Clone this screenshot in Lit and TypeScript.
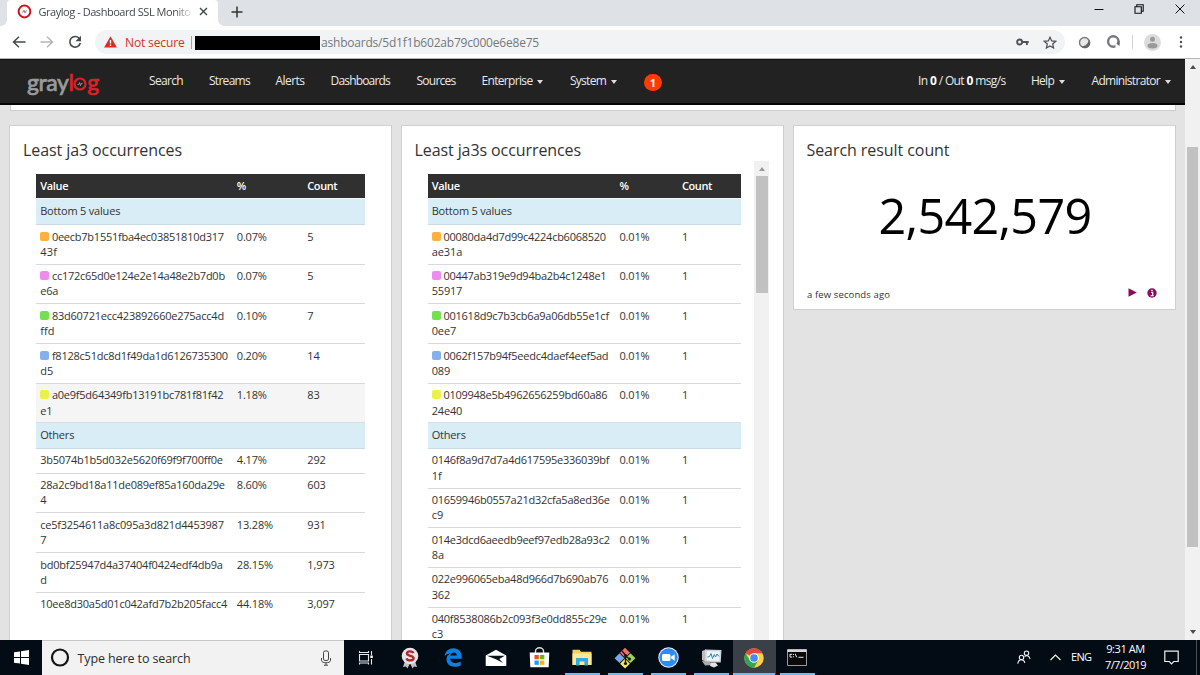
import { LitElement, html, css, svg } from "lit";
import { customElement, property } from "lit/decorators.js";
import { classMap } from "lit/directives/class-map.js";

/** One line of text whose tracking is tuned so that it spans a given width. */
@customElement("fit-text")
class FitText extends LitElement {
  @property({ type: Number }) w = 0;
  static styles = css`
    :host { display: inline-block; white-space: nowrap; }
    .line { display: inline-block; white-space: pre; }
  `;
  render() {
    return html`<span class="line"><slot></slot></span>`;
  }
  firstUpdated() {
    const line = this.renderRoot.querySelector(".line") as HTMLElement;
    const chars = (this.textContent || "").length;
    const natural = line.getBoundingClientRect().width;
    if (chars && this.w) {
      line.style.letterSpacing = `${(this.w - natural) / chars}px`;
      this.style.width = `${this.w}px`;
    }
  }
}

const t = (text: string, w: number) => html`<fit-text w=${w}>${text}</fit-text>`;

type Row = { lines: [string, number][]; pct: string; pw: number; count: string; cw: number; color?: string; hover?: boolean };

const row = (a: string, aw: number, b: string, bw: number, pct: string, pw: number, count: string, cw: number, color?: string, hover = false): Row => ({
  lines: b ? [[a, aw], [b, bw]] : [[a, aw]], pct, pw, count, cw, color, hover,
});

const ORANGE = "#fbb040", PINK = "#ee8cee", GREEN = "#75e04e", BLUE = "#84b0ee", YELLOW = "#ebf149";

const ja3Top: Row[] = [
  row("0eecb7b1551fba4ec03851810d317", 172, "43f", 17, "0.07%", 30, "5", 6.3, ORANGE),
  row("cc172c65d0e124e2e14a48e2b7d0b", 173, "e6a", 18, "0.07%", 30, "5", 6.3, PINK),
  row("83d60721ecc423892660e275acc4d", 172, "ffd", 14.5, "0.10%", 30, "7", 6.3, GREEN),
  row("f8128c51dc8d1f49da1d6126735300", 176, "d5", 13, "0.20%", 30, "14", 12.6, BLUE),
  row("a0e9f5d64349fb13191bc781f81f42", 171.5, "e1", 12, "1.18%", 30, "83", 12.6, YELLOW, true),
];
const ja3Others: Row[] = [
  row("3b5074b1b5d032e5620f69f9f700ff0e", 182.5, "", 0, "4.17%", 30, "292", 18.5),
  row("28a2c9bd18a11de089ef85a160da29e", 184.5, "4", 6.3, "8.60%", 30, "603", 18.5),
  row("ce5f3254611a8c095a3d821d4453987", 183.5, "7", 6.3, "13.28%", 36.3, "931", 18.5),
  row("bd0bf25947d4a37404f0424edf4db9a", 182.5, "d", 6.5, "28.15%", 36.3, "1,973", 27.5),
  row("10ee8d30a5d01c042afd7b2b205facc4", 187, "", 0, "44.18%", 36.3, "3,097", 27.5),
];
const ja3sTop: Row[] = [
  row("00080da4d7d99c4224cb6068520", 162.5, "ae31a", 30.5, "0.01%", 30, "1", 6.3, ORANGE),
  row("00447ab319e9d94ba2b4c1248e1", 163, "55917", 30.5, "0.01%", 30, "1", 6.3, PINK),
  row("001618d9c7b3cb6a9a06db55e1cf", 165.5, "0ee7", 24.5, "0.01%", 30, "1", 6.3, GREEN),
  row("0062f157b94f5eedc4daef4eef5ad", 165, "089", 18.5, "0.01%", 30, "1", 6.3, BLUE),
  row("0109948e5b4962656259bd60a86", 164, "24e40", 30.5, "0.01%", 30, "1", 6.3, YELLOW),
];
const ja3sOthers: Row[] = [
  row("0146f8a9d7d7a4d617595e336039bf", 177.5, "1f", 10, "0.01%", 30, "1", 6.3),
  row("01659946b0557a21d32cfa5a8ed36e", 178, "c9", 11.5, "0.01%", 30, "1", 6.3),
  row("014e3dcd6aeedb9eef97edb28a93c2", 178, "8a", 12.5, "0.01%", 30, "1", 6.3),
  row("022e996065eba48d966d7b690ab76", 176.5, "362", 18.5, "0.01%", 30, "1", 6.3),
  row("040f8538086b2c093f3e0dd855c29e", 175, "c3", 11.5, "0.01%", 30, "1", 6.3),
];

@customElement("quick-table")
class QuickTable extends LitElement {
  @property({ attribute: false }) top: Row[] = [];
  @property({ attribute: false }) others: Row[] = [];
  @property({ type: Boolean, reflect: true }) narrow = false;

  static styles = css`
    :host { display: block; width: 328.5px; font: 11px/15px "Open Sans", sans-serif; color: #333; --cols: 196.6px 70.5px 1fr; }
    :host([narrow]) { width: 313.5px; --cols: 187.8px 62.5px 1fr; }
    .row { display: grid; grid-template-columns: var(--cols); box-sizing: border-box; padding: 3.5px 0 0 4.2px; border-top: 1px solid #d9d9d9; height: 24.8px; }
    .row.two { height: 39.7px; }
    .row.first { border-top-color: #c8dbe4; }
    .row.hover { background: #f5f5f5; }
    .row.head { height: 24px; background: #303030; color: #fff; font-weight: 600; border: 0; padding-top: 3.800px; }
    .group { height: 25.4px; background: #d9edf7; border-top: 1px solid #d6dfe3; padding: 4px 0 0 4.2px; box-sizing: border-box; }
    .group.lead { height: 26px; border-top-color: #f2f4f5; }
    .line { height: 15.200px; display: flex; align-items: center; }
    .chip { width: 9px; height: 9px; border-radius: 2px; margin-right: 2.700px; flex: none; }
    fit-text { vertical-align: top; }
  `;

  private row(r: Row, first: boolean) {
    return html`<div class=${classMap({ row: true, two: r.lines.length > 1, hover: !!r.hover, first })}>
      <div>${r.lines.map(([s, w], i) => html`<div class="line">
        ${i === 0 && r.color ? html`<span class="chip" style="background:${r.color}"></span>` : ""}${t(s, w)}</div>`)}</div>
      <div>${t(r.pct, r.pw)}</div>
      <div>${t(r.count, r.cw)}</div>
    </div>`;
  }

  render() {
    return html`
      <div class="row head"><div>${t("Value", 28)}</div><div>${t("%", 9)}</div><div>${t("Count", 30)}</div></div>
      <div class="group lead">${t("Bottom 5 values", 80)}</div>
      ${this.top.map((r, i) => this.row(r, i === 0))}
      <div class="group">${t("Others", 34)}</div>
      ${this.others.map((r, i) => this.row(r, i === 0))}
    `;
  }
}

const pulse = svg`<path d="M-2.6 .6h1.2l1-2 .9 3 .9-2.2h1.2" fill="none" stroke-width=".8"/>`;

@customElement("browser-bar")
class BrowserBar extends LitElement {
  static styles = css`
    :host { display: block; font-family: "Open Sans", sans-serif; }
    svg { display: block; }
    .strip { height: 26px; background: #dee1e6; display: flex; }
    .tab { width: 211px; margin-left: 7px; background: #fff; position: relative; box-sizing: border-box; padding: 0 10px 3px 10px; display: flex; align-items: center; font-size: 11px; color: #45494d; border-radius: 4px 4px 0 0; }
    .tab::before, .tab::after { content: ""; position: absolute; bottom: 0; width: 6px; height: 6px; }
    .tab::before { left: -6px; background: radial-gradient(circle at 0 0, transparent 5.5px, #fff 6px); }
    .tab::after { right: -6px; background: radial-gradient(circle at 100% 0, transparent 5.5px, #fff 6px); }
    .title { margin-left: 6.500px; width: 153px; overflow: hidden; -webkit-mask-image: linear-gradient(90deg, #000 136px, transparent 156px); }
    .x { margin-left: 8px; }
    .plus { margin: 6px 0 0 13px; }
    .controls { margin-left: auto; display: flex; gap: 30.500px; padding: 4px 15.500px 0 0; }
    .tools { height: 33px; box-sizing: border-box; background: #fff; border-bottom: 1px solid #b6b6b6; display: flex; align-items: center; padding-left: 12px; }
    .tools > * { flex: none; }
    .g1 { margin-left: 14px; }
    .omni { margin-left: 13px; width: 970px; height: 24px; border-radius: 12px; background: #f1f3f4; display: flex; align-items: center; box-sizing: border-box; padding-left: 9px; font-size: 12px; }
    .danger { color: #d93025; margin-left: 8px; }
    .div { width: 1px; height: 13px; background: #a0a3a6; margin: 0 3px 0 6.5px; }
    .mask { width: 125px; height: 14px; background: #000; margin-top: 2px; }
    .url { color: #74787c; margin-left: 1px; }
    .key { margin-left: auto; }
    .star { margin: 0 8px 0 14px; }
    .ext { margin-left: 13px; } .ext2 { margin-left: 15px; }
    .sep { width: 1px; height: 14px; background: #cfd1d3; margin: 0 11px; }
    .dots { margin-left: 18px; }
  `;
  render() {
    return html`
      <div class="strip">
        <div class="tab">
          <svg width="15" height="15" viewBox="-7.5 -7.5 15 15"><circle r="5.9" fill="#fff" stroke="#c9151e" stroke-width="2"/><g stroke="#777">${pulse}</g></svg>
          <span class="title">${t("Graylog - Dashboard SSL Monito", 152)}</span>
          <svg class="x" width="9" height="9" viewBox="0 0 9 9"><path d="M1 1l7 7M8 1l-7 7" stroke="#44484c" stroke-width="1.4"/></svg>
        </div>
        <svg class="plus" width="12" height="12" viewBox="0 0 12 12"><path d="M6 .5v11M.5 6h11" stroke="#333" stroke-width="1.5"/></svg>
        <div class="controls">
          <svg width="10" height="10" viewBox="0 0 10 10"><path d="M.5 5.5h9" stroke="#111"/></svg>
          <svg width="10" height="10" viewBox="0 0 10 10"><path d="M1 2.7h6.3V9.200H1zM2.800 2.700V.8H9.200v6.500H7.300" fill="none" stroke="#111" stroke-width="1.1"/></svg>
          <svg width="10" height="10" viewBox="0 0 10 10"><path d="M.6.6l8.800 8.800M9.400.6L.6 9.400" stroke="#111"/></svg>
        </div>
      </div>
      <div class="tools">
        <svg width="14" height="12" viewBox="0 0 14 12"><path d="M13.500 6H1.500M7 .8L1.500 6 7 11.200" fill="none" stroke="#46494d" stroke-width="1.5"/></svg>
        <svg class="g1" width="14" height="12" viewBox="0 0 14 12"><path d="M.5 6h12M7 .8L12.500 6 7 11.200" fill="none" stroke="#b4b6b9" stroke-width="1.500"/></svg>
        <svg class="g1" width="14" height="14" viewBox="0 0 14 14"><path d="M11.500 3.800A5.300 5.300 0 1 0 12.300 8" fill="none" stroke="#46494d" stroke-width="1.600"/><path d="M13 .7v5.600H7.400z" fill="#46494d"/></svg>
        <div class="omni">
          <svg width="13" height="12" viewBox="0 0 13 12"><path d="M6.500 .3L12.900 11.600H.1z" fill="#d93025"/><path d="M6.500 4v3.500M6.500 8.600v1.400" stroke="#fff" stroke-width="1.300"/></svg>
          <span class="danger">${t("Not secure", 59.5)}</span>
          <span class="div"></span><span class="mask"></span>
          <span class="url">${t("ashboards/5d1f1b602ab79c000e6e8e75", 218)}</span>
          <svg class="key" width="13" height="8" viewBox="0 0 13 8"><circle cx="3.600" cy="4" r="2.500" fill="none" stroke="#505357" stroke-width="1.900"/><path d="M6 4h6.700M10.900 4v3" stroke="#505357" stroke-width="1.900"/></svg>
          <svg class="star" width="14" height="13" viewBox="0 0 14 13"><path d="M7 1.200l1.700 3.700 4.100.4-3.100 2.700.9 4L7 9.900 3.400 12l.9-4L1.200 5.300l4.100-.4z" fill="none" stroke="#4c4f53" stroke-width="1.200"/></svg>
        </div>
        <svg class="ext" width="13" height="13" viewBox="0 0 13 13"><circle cx="6.500" cy="6.500" r="5" fill="#e8e8e8" stroke="#77797b" stroke-width="1.400"/><path d="M11 3.500A5 5 0 0 1 3 10.500C7 10.500 10 8 11 3.500z" fill="#666"/></svg>
        <svg class="ext2" width="15" height="14" viewBox="0 0 15 14"><circle cx="7.300" cy="6.500" r="5.200" fill="none" stroke="#77797b" stroke-width="2.400"/><path d="M9.500 9h5v5h-5z" fill="#fff"/><path d="M13.600 5.500V11l-3.200-2.200z" fill="#66686b"/></svg>
        <span class="sep"></span>
        <svg width="17" height="17" viewBox="0 0 17 17"><circle cx="8.500" cy="8.500" r="8.500" fill="#dcdcdc"/><circle cx="8.500" cy="5.300" r="2.500" fill="#9a9a9a"/><ellipse cx="8.500" cy="11.700" rx="5" ry="2.700" fill="#9a9a9a"/></svg>
        <svg class="dots" width="4" height="12" viewBox="0 0 4 12"><g fill="#4a4d50"><circle cx="2" cy="1.500" r="1.200"/><circle cx="2" cy="6" r="1.200"/><circle cx="2" cy="10.500" r="1.200"/></g></svg>
      </div>`;
  }
}

@customElement("gray-nav")
class GrayNav extends LitElement {
  static styles = css`
    :host { display: grid; height: 46px; box-sizing: border-box; background: #222; border-bottom: 2px solid #050505; border-top: 1px solid #111;
      grid-template-columns: 122px 60px 66.5px 55px 86px 65px 88.5px 74px 274px 113px 60.500px 1fr; padding-left: 27px; color: #e9e9e9; font: 12px/20px "Open Sans", sans-serif; }
    .i { padding-top: 11px; display: flex; height: 20px; }
    .c { margin: 9px 0 0 4.500px; width: 0; height: 0; border: 3.500px solid transparent; border-top: 4px solid #ddd; border-bottom: 0; }
    .badge { width: 18px; height: 17px; border-radius: 9px; background: #ff3b00; color: #fff; font-weight: 700; font-size: 11px; line-height: 17px; text-align: center; margin-top: 14px; }
    .logo { display: flex; font: 500 23px/28px Lato, sans-serif; padding-top: 8px; color: #999b9e; -webkit-text-stroke: .6px currentColor; }
    .r { color: #d9232b; display: flex; }
    .o { width: 14px; height: 14px; margin: 8.500px .3px 0 0; }
    b { font-weight: 700; color: #fff; }
  `;
  render() {
    const item = (s: string, w: number, caret = false) => html`<div class="i">${t(s, w)}${caret ? html`<span class="c"></span>` : ""}</div>`;
    return html`
      <div class="logo">${t("gray", 41.500)}<span class="r">${t("l", 4.500)}<svg class="o" viewBox="-7 -7 14 14"><circle r="5.500" fill="none" stroke="#d9232b" stroke-width="2.200"/><g stroke="#aaa">${pulse}</g></svg>${t("g", 12.500)}</span></div>
      ${item("Search", 34)}${item("Streams", 41)}${item("Alerts", 29)}${item("Dashboards", 59.500)}${item("Sources", 39)}
      ${item("Enterprise", 51, true)}${item("System", 36, true)}
      <div class="badge">1</div>
      <div class="i"><fit-text w="87.500">In <b>0</b> / Out <b>0</b> msg/s</fit-text></div>
      ${item("Help", 23, true)}${item("Administrator", 68.500, true)}`;
  }
}

@customElement("task-bar")
class TaskBar extends LitElement {
  static styles = css`
    :host { display: flex; height: 35px; background: #030b14; color: #fff; font-family: "Open Sans", sans-serif; }
    svg { display: block; flex: none; }
    .start { width: 42px; display: flex; align-items: center; justify-content: center; }
    .search { width: 302px; background: #f2f2f2; border-top: 1px solid #c6c8c8; box-sizing: border-box; padding: 0 12px 0 8px; display: flex; align-items: center; color: #2d2d2d; font-size: 12.500px; }
    .ph { margin-left: 7.500px; } .mic { margin-left: auto; }
    .apps { display: flex; padding-left: 1.500px; }
    .app { width: 43px; height: 35px; display: flex; align-items: center; justify-content: center; box-sizing: border-box; }
    .app.view { padding-right: 3px; }
    .run { background: linear-gradient(#76b9ed, #76b9ed) center bottom / 35px 2px no-repeat; }
    .on { background: linear-gradient(#76b9ed, #76b9ed) center bottom / 42px 2px no-repeat, #3a3f48; }
    .tray { margin-left: auto; display: flex; align-items: center; font-size: 11px; }
    .clock { line-height: 15.500px; display: flex; flex-direction: column; align-items: center; width: 40px; margin: -2px 18.500px 0 14px; }
    .lang { margin: -2px 0 0 10px; }
    .caret { margin-left: 19.500px; }
    .edge { width: 1px; height: 35px; background: #4a4f55; margin: 0 3px 0 17px; }
  `;
  render() {
    return html`
      <div class="start"><svg width="15" height="15" viewBox="0 0 15 15"><path d="M0 2.300l6-.9V7H0zM7 1.200L15 0v7H7zM0 8h6v5.600l-6-.9zM7 8h8v7l-8-1.200z" fill="#fff"/></svg></div>
      <div class="search">
        <svg width="20" height="20" viewBox="0 0 20 20"><circle cx="10" cy="9.500" r="8" fill="none" stroke="#151515" stroke-width="2.200"/></svg>
        <span class="ph">${t("Type here to search", 113)}</span>
        <svg class="mic" width="12" height="16" viewBox="0 0 12 16"><rect x="3.500" y="1" width="5" height="9.500" rx="1.600" fill="none" stroke="#444"/><path d="M1.500 8v2.500c0 3 9 3 9 0V8M6 13v2.200M4 15.200h4" fill="none" stroke="#444"/></svg>
      </div>
      <div class="apps">
        <div class="app view"><svg width="20" height="16" viewBox="0 0 20 16"><path d="M3.500 4.500h9v6.500h-9zM3.500 1v1.500h9V1M3.500 14.500V13h9v1.500M15.500 1v4M15.500 9v5.500" fill="none" stroke="#e6e6e6" stroke-width="1.100"/><path d="M14.300 5.500h2.500V8h-2.500z" fill="#fff"/></svg></div>
        <div class="app"><svg width="18" height="22" viewBox="0 0 18 22"><path d="M4 14l-2 6 3-.5 1.500 2L9 16l2.500 5.500 1.500-2 3 .5-2-6z" fill="#c2c2c2"/><circle cx="9" cy="9" r="8.300" fill="#e5e5e5"/><path d="M12.300 6.200C11.500 3.700 6 3.700 6 6.600c0 3 6.600 1.600 6.600 4.700 0 2.800-6.300 2.700-7.100 0" fill="none" stroke="#b3262e" stroke-width="2.400"/></svg></div>
        <div class="app"><svg width="18" height="19" viewBox="0 0 18 19"><path d="M.5 8.200C1.500 3 5 .3 9.300.3c5.500 0 8.400 4 8.400 8.300v2.100H6.200c.2 3 2.900 4.200 5.600 4.200 2 0 3.600-.6 4.900-1.300v3.800c-1.500.8-3.600 1.400-6 1.400-5 0-8.200-3-8.200-7.200 0-3 1.500-5.100 4-6.400C3.600 5.600 1.700 6.800.5 8.200zM6.300 7.600h6.500c0-2-1.100-3.200-3.100-3.200-1.900 0-3.100 1.300-3.400 3.200z" fill="#0b82e0" fill-rule="evenodd"/></svg></div>
        <div class="app"><svg width="22" height="18" viewBox="0 0 22 18"><path d="M.7 6.500L11 .7l10.300 5.800V17H.7z" fill="#fff"/><path d="M2 6.800h17.800l-5.500 3.300 3.700 4-6.500-3.500z" fill="#0b1118"/></svg></div>
        <div class="app"><svg width="21" height="21" viewBox="0 0 21 21"><path d="M6.500 6.500V4a4 3.300 0 0 1 8 0v2.500" fill="none" stroke="#ddd" stroke-width="1.400"/><path d="M.7 5.500h19.600l-.6 14.800H1.300z" fill="#fff"/><path d="M5.500 8h4.300v4.300H5.500z" fill="#f04e23"/><path d="M11 8h4.300v4.300H11z" fill="#6db71d"/><path d="M5.500 13.500h4.300v4.300H5.500z" fill="#189fe8"/><path d="M11 13.500h4.300v4.300H11z" fill="#f7b500"/></svg></div>
        <div class="app run"><svg width="20" height="17" viewBox="0 0 20 17"><path d="M.5.8h7l1.500 2h10.500v13H.5z" fill="#f6ce62"/><path d="M.5 4.500h19V16H.5z" fill="#fde79d"/><path d="M4 16.500V9h12v7.500h-3.600v-4H7.600v4z" fill="#35a8e0"/></svg></div>
        <div class="app run"><svg width="22" height="22" viewBox="0 0 22 22"><g transform="rotate(45 11 11)"><path d="M3.700 3.700h7v7h-7z" fill="#ee7168"/><path d="M11.500 3.700h7v7h-7z" fill="#9ccf62"/><path d="M3.700 11.500h7v7h-7z" fill="#79a8e6"/><path d="M11.500 11.500h7v7h-7z" fill="#f8e36c"/></g><path d="M8 4l3.500 4v9M11.500 9l4 3" stroke="#151515" stroke-width="1.300" fill="none"/><g fill="#151515"><circle cx="11.500" cy="8.500" r="1.500"/><circle cx="11.500" cy="16.500" r="1.600"/><circle cx="15.500" cy="12" r="1.500"/></g></svg></div>
        <div class="app run"><svg width="21" height="21" viewBox="0 0 21 21"><circle cx="10.500" cy="10.500" r="10.200" fill="#e8f1ff"/><circle cx="10.500" cy="10.500" r="9.200" fill="#2a8cff"/><rect x="4" y="7" width="8.500" height="7" rx="1.500" fill="#fff"/><path d="M13.200 9.500l3.500-2.300v6.600l-3.500-2.300z" fill="#fff"/></svg></div>
        <div class="app run"><svg width="21" height="20" viewBox="0 0 21 20"><path d="M1 3l4-1.500V14l-4-2z" fill="#bcbcbc"/><path d="M4 1.500l16.500.5-.8 12.500L4 14z" fill="#d2d4d4"/><path d="M5.800 3.300l13 .3-.6 9.200-12.400-.4z" fill="#edf6fb"/><path d="M6.500 9l2-.5 1.500-3 1.500 5 1.800-4 1.200 2.500 1.500-3 2 2.500" fill="none" stroke="#2386bf"/><path d="M1 13l8 .5 2 3.500-7 .5z" fill="#aaa"/><path d="M10 14.500h4.500l2.500 3-4 2-4-1.500z" fill="#e3e3e3"/></svg></div>
        <div class="app on"><svg width="20" height="20" viewBox="-10 -10 20 20"><circle r="9.700" fill="#fdd23c"/><path d="M0 0L-8.400-4.850A9.700 9.700 0 0 1 8.400-4.850H0z" fill="#e2483d"/><path d="M-8.400-4.850A9.700 9.700 0 0 0 0 9.700L4.200 2.400 0 0-4.200 2.400z" fill="#2fa556"/><circle r="4.850" fill="#fff"/><circle r="3.800" fill="#4a8af4"/></svg></div>
        <div class="app run"><svg width="20" height="17" viewBox="0 0 20 17"><path d="M.5.5h19v16H.5z" fill="#0a0a0a" stroke="#9b9b9b"/><path d="M.5.5h19v2.500H.5z" fill="#d6d6d6"/><path d="M3 5.300h2.200M3 5v3h2.200M6.500 5v1M6.500 7.300v1M8.200 4.800l1.500 3.500M11.500 8.300h5" stroke="#e8e8e8" fill="none"/></svg></div>
      </div>
      <div class="tray">
        <svg width="14" height="15" viewBox="0 0 14 15"><g fill="none" stroke="#f0f0f0" stroke-width="1.100"><circle cx="4.500" cy="7.500" r="2.200"/><path d="M.8 13.800c.3-2.600 1.800-4 3.700-4s3 1.400 3.300 3.200"/><circle cx="9.500" cy="3.200" r="2.200"/><path d="M7.500 6.500c2.500-1.700 5-.5 5.500 2.500"/></g></svg>
        <svg class="caret" width="11" height="7" viewBox="0 0 11 7"><path d="M.5 6l5-5 5 5" fill="none" stroke="#f0f0f0" stroke-width="1.200"/></svg>
        <span class="lang">${t("ENG", 20.500)}</span>
        <span class="clock">${t("9:31 AM", 38.500)}${t("7/7/2019", 41)}</span>
        <svg width="15" height="15" viewBox="0 0 15 15"><path d="M.8 1.200h13.400v10.300h-4.500l-2.200 2.300-2.200-2.300H.8z" fill="none" stroke="#f0f0f0" stroke-width="1.200"/></svg>
        <span class="edge"></span>
      </div>`;
  }
}

@customElement("app-root")
class AppRoot extends LitElement {
  static styles = css`
    :host { display: flex; flex-direction: column; width: 1200px; height: 675px; overflow: hidden; font-family: "Open Sans", sans-serif; color: #333; background: #fff; }
    browser-bar, task-bar { flex: none; }
    .page { display: flex; height: 581px; flex: none; overflow: hidden; }
    .view { width: 1185px; height: 581px; overflow: hidden; background: #e3e3e3; }
    .prev { width: 1166.500px; margin-left: 9.500px; height: 6px; background: #fff; border: 1px solid #ccc; border-top: 0; box-sizing: border-box; }
    .cards { display: flex; gap: 8.500px; margin: 14px 0 0 9px; align-items: flex-start; }
    .card { width: 383px; height: 540px; background: #fff; border: 1px solid #cfcfcf; box-sizing: border-box; flex: none; }
    .card.small { height: 185px; margin-left: .5px; display: flex; flex-direction: column; }
    h3 { font-weight: 400; font-size: 16px; line-height: 22px; margin: 13px 0 0 13px; height: 22px; }
    .body { display: flex; padding-left: 26px; }
    .body quick-table { margin-top: 13px; }
    .bar { width: 15px; height: 490px; background: #f1f1f1; margin-left: 13px; display: flex; flex-direction: column; align-items: center; }
    .up { width: 0; height: 0; border: 3.500px solid transparent; border-top: 0; border-bottom: 4px solid #9a9a9a; margin-top: 5.500px; }
    .thumb { width: 12px; height: 117px; background: #c1c1c1; margin-top: 5.500px; }
    .num { font-size: 48.500px; line-height: 60px; color: #000; margin: 24px 0 0 85px; }
    .foot { margin-top: auto; display: flex; align-items: center; padding: 0 17.500px 5px 13.500px; font-size: 9.500px; line-height: 18px; }
    .foot .play { margin-left: auto; }
    .foot svg { margin-top: -5px; }
    .info { margin-left: 10.500px; }
    .scroll { width: 15px; height: 581px; background: #f1f1f1; display: flex; flex-direction: column; align-items: center; }
    .scroll .up { border-bottom-color: #4c4c4c; margin-top: 6px; }
    .scroll .thumb { width: 11px; height: 400px; margin-top: 78px; }
    .down { width: 0; height: 0; border: 3.500px solid transparent; border-bottom: 0; border-top: 4px solid #4c4c4c; margin: auto 0 6px; }
  `;
  render() {
    return html`
      <browser-bar></browser-bar>
      <div class="page">
        <div class="view">
          <gray-nav></gray-nav>
          <div class="prev"></div>
          <div class="cards">
            <section class="card">
              <h3>${t("Least ja3 occurrences", 159)}</h3>
              <div class="body"><quick-table .top=${ja3Top} .others=${ja3Others}></quick-table></div>
            </section>
            <section class="card">
              <h3>${t("Least ja3s occurrences", 166.500)}</h3>
              <div class="body"><quick-table narrow .top=${ja3sTop} .others=${ja3sOthers}></quick-table>
                <div class="bar"><i class="up"></i><i class="thumb"></i></div></div>
            </section>
            <section class="card small">
              <h3>${t("Search result count", 143)}</h3>
              <div class="num">${t("2,542,579", 213)}</div>
              <div class="foot">
                ${t("a few seconds ago", 83)}
                <svg class="play" width="9" height="9" viewBox="0 0 9 9"><path d="M.5.300L8.800 4.500.5 8.700z" fill="#8c0c5c"/></svg>
                <svg class="info" width="10" height="10" viewBox="0 0 10 10"><circle cx="5" cy="5" r="4.700" fill="#8c0c5c"/><path d="M4 4.400h1.700v3.200M3.700 7.600h2.900M4.200 2.400h1.500" fill="none" stroke="#fff" stroke-width="1.200"/></svg>
              </div>
            </section>
          </div>
        </div>
        <div class="scroll"><i class="up"></i><i class="thumb"></i><i class="down"></i></div>
      </div>
      <task-bar></task-bar>`;
  }
}
